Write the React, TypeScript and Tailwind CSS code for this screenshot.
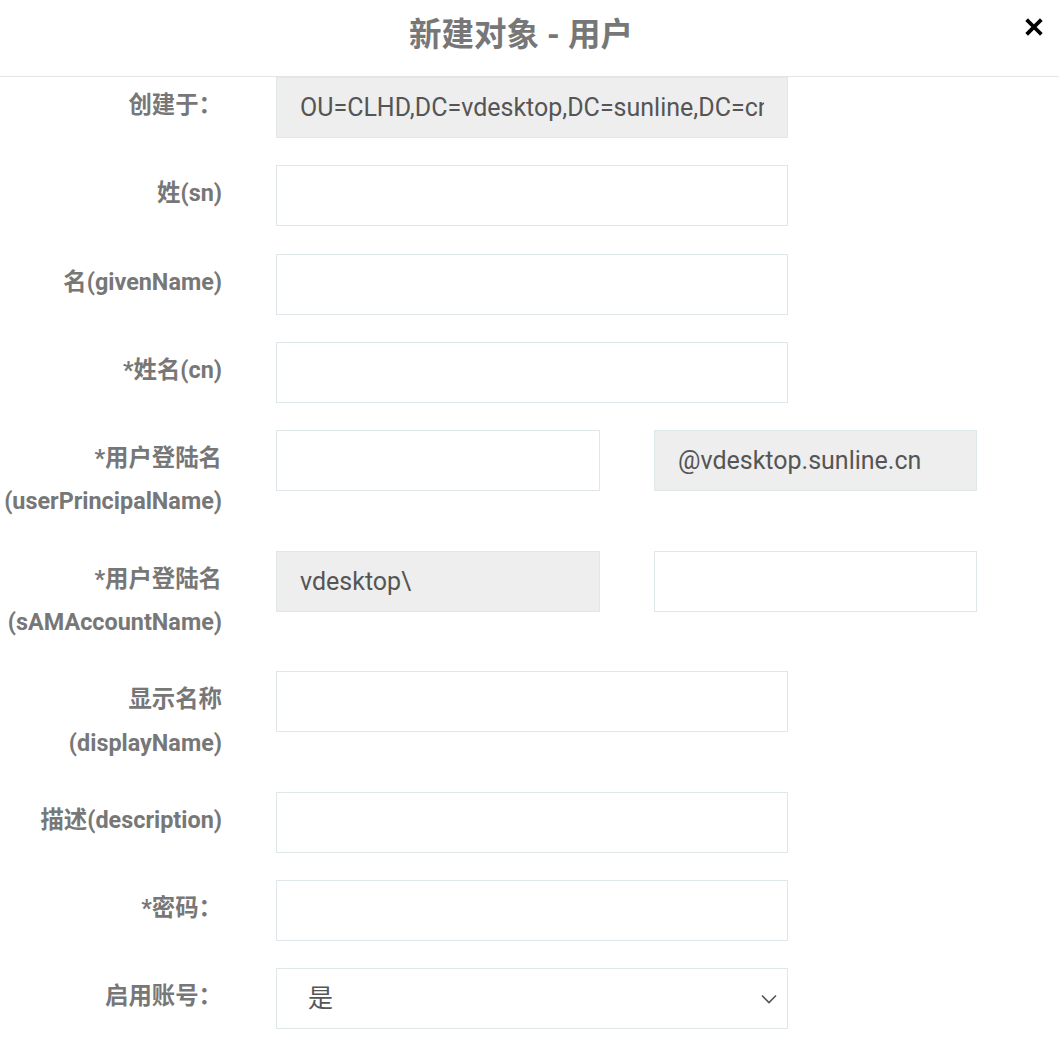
import React from 'react';

const labelCls =
  "w-[222px] shrink-0 text-right pt-[7px] leading-[43.2px] text-[23.4px] font-bold text-[#777]";
const inputCls =
  "h-[61px] border border-[#dfe7ea] px-[23px] text-[25px] text-[#555] outline-none";

interface FieldProps {
  label: React.ReactNode;
  children: React.ReactNode;
}

const Field: React.FC<FieldProps> = ({ label, children }) => (
  <div className="flex items-start mb-[27.25px]">
    <div className={labelCls}>{label}</div>
    <div className="ml-[54px] flex gap-[54px]">{children}</div>
  </div>
);

const TextInput: React.FC<{ value?: string; gray?: boolean; width?: string }> = ({ value = '', gray, width = 'w-[512px]' }) => (
  <input
    readOnly
    value={value}
    className={`${inputCls} ${width} ${gray ? 'bg-[#eeeeee]' : 'bg-white'}`}
  />
);

const App: React.FC = () => {
  return (
    <div className="w-[1059px] min-h-[1053px] bg-white" style={{ fontFamily: 'Roboto, "Noto Sans CJK SC", sans-serif' }}>
      <header className="relative h-[77px] border-b border-[#e5e5e5] flex items-center justify-center pr-[17px] pb-[6px]">
        <h3 className="text-[32.5px] font-bold text-[#777] leading-none">新建对象 - 用户</h3>
        <button className="absolute right-[16px] top-[18px] w-[18px] h-[18px]">
          <svg viewBox="0 0 18 18" className="w-[18px] h-[18px]">
            <path d="M3 3 L15 15 M15 3 L3 15" stroke="#000" strokeWidth="3.8" strokeLinecap="square" />
          </svg>
        </button>
      </header>

      <main>
        <Field label="创建于：">
          <TextInput gray value="OU=CLHD,DC=vdesktop,DC=sunline,DC=cn" />
        </Field>
        <Field label="姓(sn)">
          <TextInput />
        </Field>
        <Field label="名(givenName)">
          <TextInput />
        </Field>
        <Field label="*姓名(cn)">
          <TextInput />
        </Field>
        <Field label={<>*用户登陆名<br />(userPrincipalName)</>}>
          <TextInput width="w-[324px]" />
          <TextInput width="w-[323px]" gray value="@vdesktop.sunline.cn" />
        </Field>
        <Field label={<>*用户登陆名<br />(sAMAccountName)</>}>
          <TextInput width="w-[324px]" gray value="vdesktop\" />
          <TextInput width="w-[323px]" />
        </Field>
        <Field label={<>显示名称<br />(displayName)</>}>
          <TextInput />
        </Field>
        <Field label="描述(description)">
          <TextInput />
        </Field>
        <Field label="*密码：">
          <input type="password" readOnly className={`${inputCls} w-[512px] bg-white`} />
        </Field>
        <Field label="启用账号：">
          <div className="w-[512px] h-[61px] border border-[#dfe7ea] bg-white flex items-center justify-between pl-[31px] pr-[10px] text-[25px] text-[#555]">
            <span>是</span>
            <svg viewBox="0 0 16 10" className="w-[16px] h-[10px]">
              <path d="M1 1.5 L8 8.5 L15 1.5" fill="none" stroke="#555" strokeWidth="1.6" />
            </svg>
          </div>
        </Field>
      </main>
    </div>
  );
};

export default App;
